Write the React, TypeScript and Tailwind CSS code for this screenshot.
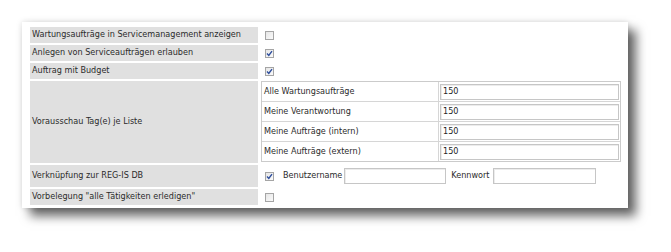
import React from 'react';

const font = "font-['DejaVu_Sans_Condensed','Liberation_Sans',Arial,sans-serif]";

function Check({ checked }: { checked?: boolean }) {
  return (
    <span className="flex h-[9px] w-[9px] items-center justify-center border border-[#a5a5a5] bg-gradient-to-br from-[#e6e6e6] to-[#fafafa]">
      {checked && (
        <svg width="7" height="7" viewBox="0 0 7 7">
          <path d="M1 3.6 L2.8 5.4 L6 1.2" fill="none" stroke="#2d4d9c" strokeWidth="1.4" />
        </svg>
      )}
    </span>
  );
}

function Field({ value, className }: { value?: string; className: string }) {
  return (
    <div
      className={`flex h-[16px] items-center border border-[#c6c6c6] bg-white px-[2px] text-[9px] text-[#1e1e1e] shadow-[inset_1px_1px_0_#ececec] ${className}`}
    >
      {value}
    </div>
  );
}

const listRows = [
  'Alle Wartungsaufträge',
  'Meine Verantwortung',
  'Meine Aufträge (intern)',
  'Meine Aufträge (extern)'
];

export default function App() {
  const label = 'flex items-center whitespace-nowrap bg-[#e0e0e0] pl-[2px] text-[9px] text-[#2b2b2b]';
  const value = 'flex items-center pl-[5px]';

  return (
    <div className={`h-[252px] w-[671px] bg-white pl-[22px] pt-[22px] ${font}`}>
      <div className="h-[186px] w-[606px] bg-white pl-[8px] pt-[5px] shadow-[8px_8px_10px_rgba(0,0,0,0.6),0_0_6px_rgba(0,0,0,0.15)]">
        <div className="grid grid-cols-[228px_361px] grid-rows-[16px_16px_16px_82px_22px_16px] gap-[2px]">
          <div className={label}>Wartungsaufträge in Servicemanagement anzeigen</div>
          <div className={value}><Check /></div>

          <div className={label}>Anlegen von Serviceaufträgen erlauben</div>
          <div className={value}><Check checked /></div>

          <div className={label}>Auftrag mit Budget</div>
          <div className={value}><Check checked /></div>

          <div className={label}>Vorausschau Tag(e) je Liste</div>
          <div className="pl-[1px]">
            <div className="flex w-[360px] flex-col gap-[1px] border border-[#cbcbcb] bg-[#d6d6d6]">
              {listRows.map((row) => (
                <div key={row} className="grid h-[19px] grid-cols-[176px_1fr] gap-[1px]">
                  <div className="flex items-center whitespace-nowrap bg-white pl-[2px] text-[9px] text-[#2b2b2b]">{row}</div>
                  <div className="flex items-center bg-white pl-[1px]">
                    <Field value="150" className="w-[179px]" />
                  </div>
                </div>
              ))}
            </div>
          </div>

          <div className={label}>Verknüpfung zur REG-IS DB</div>
          <div className={`${value} whitespace-nowrap text-[9px] text-[#2b2b2b]`}>
            <Check checked />
            <span className="ml-[9px] mr-[2px]">Benutzername</span>
            <Field className="w-[102px]" />
            <span className="ml-[5px] mr-[3px]">Kennwort</span>
            <Field className="w-[103px]" />
          </div>

          <div className={label}>Vorbelegung "alle Tätigkeiten erledigen"</div>
          <div className={value}><Check /></div>
        </div>
      </div>
    </div>
  );
}
